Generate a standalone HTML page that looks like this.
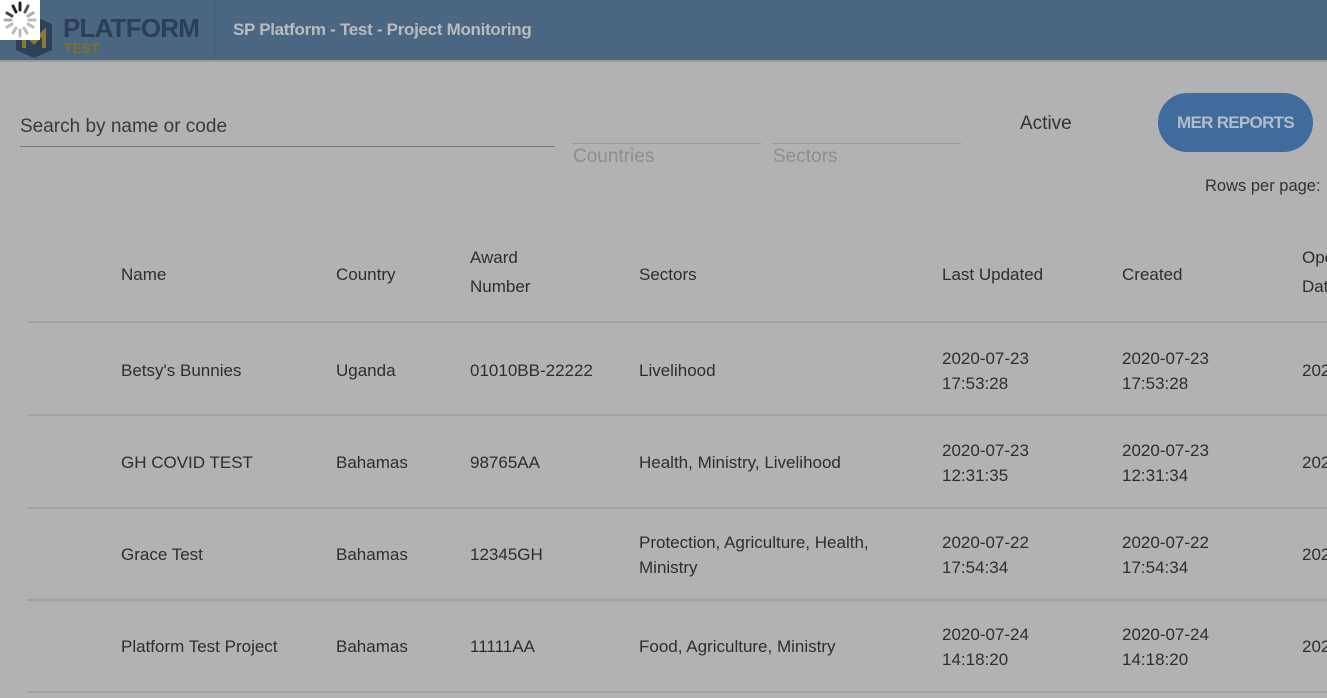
<!DOCTYPE html>
<html><head><style>
body{margin:0;width:1327px;height:698px;overflow:hidden;background:#b2b2b2;font-family:"Liberation Sans",sans-serif;position:relative;color:#2e2e2e}
.hdr{position:absolute;left:0;top:0;width:1327px;height:60px;background:#4a6680;border-bottom:2px solid #9a9a9a}
.a{position:absolute;white-space:nowrap}
.line{position:absolute;left:27px;width:1300px;height:2px;background:#a3a3a3}
.c{font-size:17px}
</style></head><body>
<div class="hdr">
<div class="a" style="left:215px;top:0;width:1px;height:60px;background:#44607a"></div>
<svg class="a" style="left:12px;top:14px" width="44" height="46"><polygon points="4,10 22,2 40,10 40,36 22,44 4,36" fill="#2d4258"/><path d="M12,18 L12,34 M12,18 L22,28 L32,18 L32,34" stroke="#8a7a2a" stroke-width="4" fill="none"/></svg>
<div class="a" style="left:63px;top:13px;font-size:26px;font-weight:bold;color:#2c3f55;letter-spacing:-0.8px">PLATFORM</div>
<div class="a" style="left:64px;top:40px;font-size:14px;font-weight:bold;color:#7a7030">TEST</div>
<div class="a" style="left:233px;top:20px;font-size:17px;font-weight:bold;color:#b8bcc0;letter-spacing:-0.3px">SP Platform - Test - Project Monitoring</div>
</div>
<div class="a" style="left:0;top:0;width:40px;height:40px;background:#fff"></div>
<svg class="a" style="left:0;top:0" width="40" height="40"><g stroke-width="3" stroke-linecap="round">
<line x1="20" y1="3" x2="20" y2="10" stroke="#222"/><line x1="28" y1="6" x2="25" y2="12" stroke="#555"/><line x1="33" y1="13" x2="28" y2="16" stroke="#aaa"/><line x1="35" y1="20" x2="29" y2="20" stroke="#bbb"/><line x1="33" y1="27" x2="28" y2="24" stroke="#bbb"/><line x1="27" y1="33" x2="24" y2="28" stroke="#bbb"/><line x1="20" y1="36" x2="20" y2="30" stroke="#bbb"/><line x1="13" y1="33" x2="16" y2="28" stroke="#bbb"/><line x1="7" y1="27" x2="12" y2="24" stroke="#bbb"/><line x1="5" y1="20" x2="11" y2="20" stroke="#aaa"/><line x1="7" y1="13" x2="12" y2="16" stroke="#444"/><line x1="13" y1="6" x2="16" y2="12" stroke="#222"/></g></svg>
<div class="a" style="left:20px;top:116px;font-size:19px;color:#3a3a3a">Search by name or code</div>
<div class="a" style="left:20px;top:146px;width:535px;height:1px;background:#777"></div>
<div class="a" style="left:573px;top:143px;width:188px;height:1px;background:#999"></div>
<div class="a" style="left:573px;top:146px;font-size:19px;color:#8e8e8e">Countries</div>
<div class="a" style="left:773px;top:143px;width:188px;height:1px;background:#999"></div>
<div class="a" style="left:773px;top:146px;font-size:19px;color:#8e8e8e">Sectors</div>
<div class="a" style="left:1020px;top:113px;font-size:19px;color:#333">Active</div>
<div class="a" style="left:1158px;top:93px;width:155px;height:59px;border-radius:30px;background:#3f6c9c;color:#b4bcc6;font-weight:bold;font-size:17px;text-align:center;line-height:59px;letter-spacing:-0.7px">MER REPORTS</div>
<div class="a" style="left:1205px;top:177px;font-size:16.5px;color:#333">Rows per page:</div>
<div class="a c" style="left:121px;top:265px">Name</div>
<div class="a c" style="left:336px;top:265px">Country</div>
<div class="a c" style="left:470px;top:243px;line-height:29px">Award<br>Number</div>
<div class="a c" style="left:639px;top:265px">Sectors</div>
<div class="a c" style="left:942px;top:265px">Last Updated</div>
<div class="a c" style="left:1122px;top:265px">Created</div>
<div class="a c" style="left:1302px;top:243px;line-height:29px">Open<br>Date</div>
<div class="line" style="top:321px"></div>
<div class="line" style="top:414px"></div>
<div class="line" style="top:507px"></div>
<div class="line" style="top:599px"></div>
<div class="line" style="top:691px"></div>

<div class="a c" style="left:121px;top:361px">Betsy's Bunnies</div>
<div class="a c" style="left:336px;top:361px">Uganda</div>
<div class="a c" style="left:470px;top:361px">01010BB-22222</div>
<div class="a c" style="left:639px;top:361px">Livelihood</div>
<div class="a c" style="left:942px;top:346px;line-height:25px">2020-07-23<br>17:53:28</div>
<div class="a c" style="left:1122px;top:346px;line-height:25px">2020-07-23<br>17:53:28</div>
<div class="a c" style="left:1302px;top:361px">2020</div>

<div class="a c" style="left:121px;top:453px">GH COVID TEST</div>
<div class="a c" style="left:336px;top:453px">Bahamas</div>
<div class="a c" style="left:470px;top:453px">98765AA</div>
<div class="a c" style="left:639px;top:453px">Health, Ministry, Livelihood</div>
<div class="a c" style="left:942px;top:438px;line-height:25px">2020-07-23<br>12:31:35</div>
<div class="a c" style="left:1122px;top:438px;line-height:25px">2020-07-23<br>12:31:34</div>
<div class="a c" style="left:1302px;top:453px">2020</div>

<div class="a c" style="left:121px;top:545px">Grace Test</div>
<div class="a c" style="left:336px;top:545px">Bahamas</div>
<div class="a c" style="left:470px;top:545px">12345GH</div>
<div class="a c" style="left:639px;top:530px;line-height:25px">Protection, Agriculture, Health,<br>Ministry</div>
<div class="a c" style="left:942px;top:530px;line-height:25px">2020-07-22<br>17:54:34</div>
<div class="a c" style="left:1122px;top:530px;line-height:25px">2020-07-22<br>17:54:34</div>
<div class="a c" style="left:1302px;top:545px">2020</div>

<div class="a c" style="left:121px;top:637px">Platform Test Project</div>
<div class="a c" style="left:336px;top:637px">Bahamas</div>
<div class="a c" style="left:470px;top:637px">11111AA</div>
<div class="a c" style="left:639px;top:637px">Food, Agriculture, Ministry</div>
<div class="a c" style="left:942px;top:622px;line-height:25px">2020-07-24<br>14:18:20</div>
<div class="a c" style="left:1122px;top:622px;line-height:25px">2020-07-24<br>14:18:20</div>
<div class="a c" style="left:1302px;top:637px">2020</div>
</body></html>
